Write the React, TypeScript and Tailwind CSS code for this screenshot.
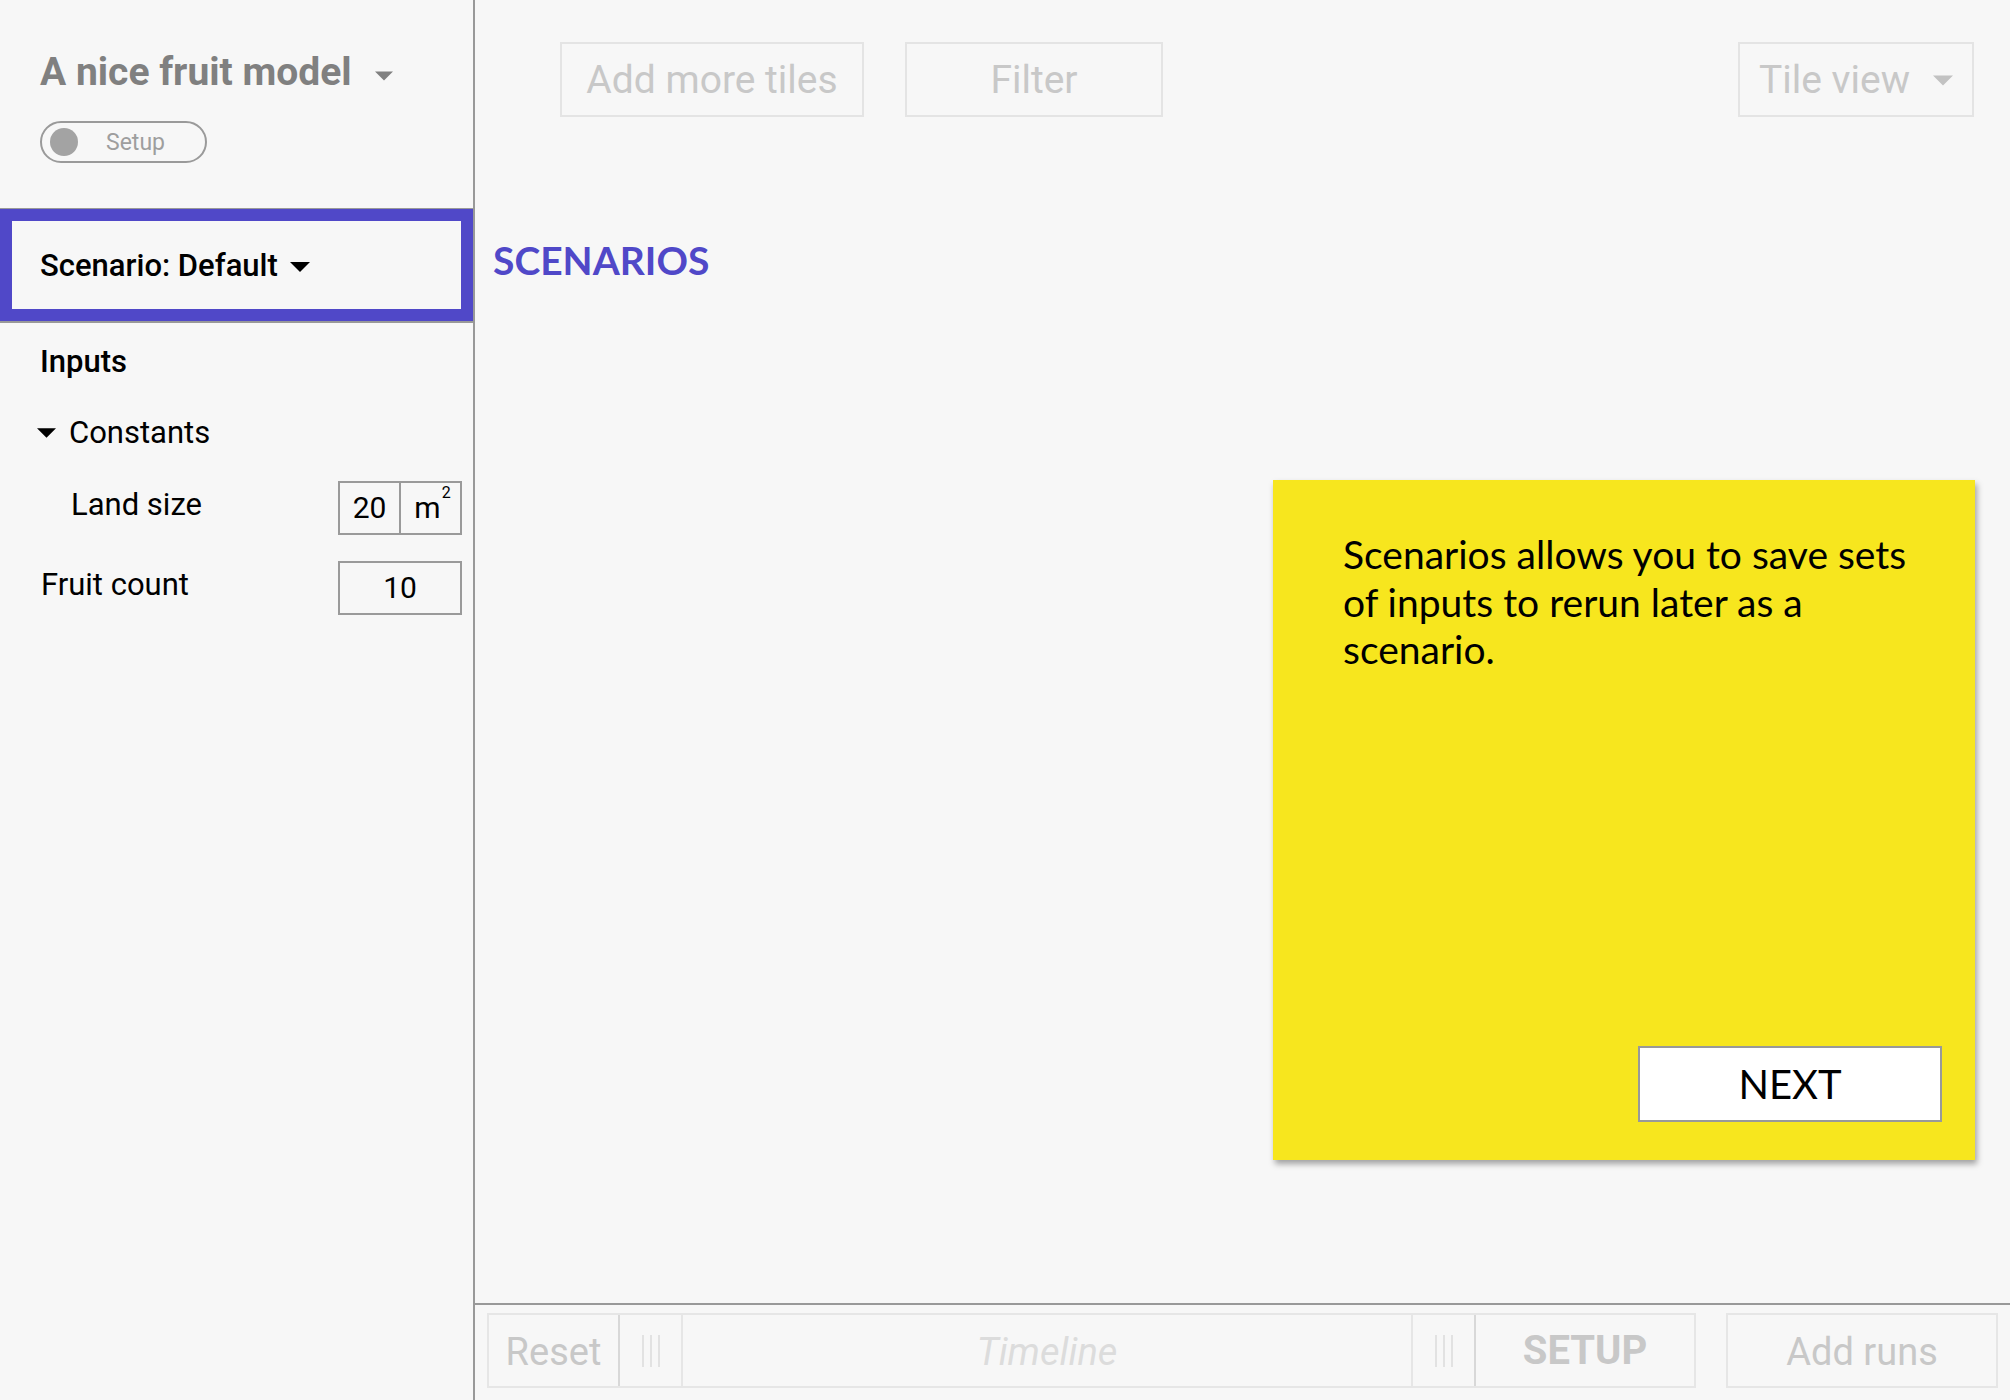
const roboto = { fontFamily: "Roboto, 'Liberation Sans', sans-serif" };
const lato = { fontFamily: "Lato, 'Open Sans', sans-serif" };

const Caret = ({ className }: { className: string }) => (
  <svg viewBox="0 0 20 10" className={className} fill="currentColor">
    <path d="M0 0 L20 0 L10 10 Z" />
  </svg>
);

const Grip = () => (
  <div className="flex gap-[6px] h-[32px]">
    <div className="w-[2px] h-full bg-[#e2e2e2]" />
    <div className="w-[2px] h-full bg-[#e2e2e2]" />
    <div className="w-[2px] h-full bg-[#e2e2e2]" />
  </div>
);

function Sidebar() {
  return (
    <aside className="w-[475px] shrink-0 border-r-2 border-[#999] flex flex-col text-black" style={roboto}>
      {/* Model title + setup toggle */}
      <div className="h-[209px] border-b border-[#999] pl-[40px] pt-[53px]">
        <div className="flex items-center">
          <h1 className="text-[39px] leading-none font-bold text-[#808080]">A nice fruit model</h1>
          <Caret className="w-[18px] h-[10px] ml-[23px] mt-[7px] text-[#808080]" />
        </div>
        <div className="mt-[29px] w-[167px] h-[42px] rounded-full border-2 border-[#9a9a9a] flex items-center pl-[8px]">
          <div className="w-[28px] h-[28px] rounded-full bg-[#a3a3a3]" />
          <span className="ml-[28px] text-[23px] leading-none text-[#9e9e9e]">Setup</span>
        </div>
      </div>

      {/* Scenario selector, highlighted */}
      <div className="border-b-2 border-[#999]">
        <div className="h-[112px] border-[12px] border-[#5048c8] flex items-center pl-[28px]">
          <span className="text-[31px] leading-none font-medium">Scenario: Default</span>
          <Caret className="w-[20px] h-[10px] ml-[12px] mt-[3px]" />
        </div>
      </div>

      {/* Inputs */}
      <div className="flex flex-col pr-[11px] text-[31px]">
        <div className="h-[76px] flex items-center pl-[40px]">
          <span className="leading-none font-medium">Inputs</span>
        </div>
        <div className="h-[67px] flex items-center pl-[37px]">
          <Caret className="w-[19px] h-[10px]" />
          <span className="ml-[13px] leading-none">Constants</span>
        </div>
        <div className="h-[84px] flex items-center justify-between pl-[71px]">
          <span className="leading-none mb-[7px]">Land size</span>
          <div className="w-[124px] h-[54px] border-2 border-[#9a9a9a] flex text-[30px] leading-none">
            <div className="w-[61px] border-r-2 border-[#9a9a9a] flex items-center justify-center">20</div>
            <div className="flex-1 flex items-center justify-center pl-[4px]">
              m<span className="relative -top-[15px] text-[16px] ml-[1px]">2</span>
            </div>
          </div>
        </div>
        <div className="h-[76px] flex items-center justify-between pl-[41px]">
          <span className="leading-none mb-[7px]">Fruit count</span>
          <div className="w-[124px] h-[54px] border-2 border-[#9a9a9a] flex items-center justify-center text-[30px] leading-none">
            10
          </div>
        </div>
      </div>
    </aside>
  );
}

function Toolbar() {
  return (
    <div className="flex pt-[42px] pr-[36px] text-[39px] leading-none text-[#c8c8c8]" style={roboto}>
      <button className="ml-[85px] w-[304px] h-[75px] border-2 border-[#e4e4e4] flex items-center justify-center pt-[2px]">
        Add more tiles
      </button>
      <button className="ml-[41px] w-[258px] h-[75px] border-2 border-[#e4e4e4] flex items-center justify-center pt-[2px]">
        Filter
      </button>
      <button className="ml-auto w-[236px] h-[75px] border-2 border-[#e4e4e4] flex items-center pl-[19px] pt-[2px]">
        Tile view
        <Caret className="w-[20px] h-[11px] ml-[23px] text-[#c2c2c2]" />
      </button>
    </div>
  );
}

function TutorialCard() {
  return (
    <div className="ml-auto mr-[35px] mt-[200px] w-[702px] h-[680px] bg-[#f7e61e] shadow-[2px_4px_6px_rgba(0,0,0,0.35)] flex flex-col" style={lato}>
      <p className="pt-[51px] pl-[70px] pr-[50px] text-[39px] leading-[47.5px] text-black">
        Scenarios allows you to save sets of inputs to rerun later as a scenario.
      </p>
      <button className="mt-auto self-end mr-[33px] mb-[38px] w-[304px] h-[76px] bg-white border-2 border-[#999] text-[40px] leading-none text-black flex items-center justify-center">
        NEXT
      </button>
    </div>
  );
}

function BottomBar() {
  return (
    <div className="h-[97px] border-t-2 border-[#999] pt-[8px] px-[12px] flex text-[38px] leading-none text-[#c8c8c8]" style={roboto}>
      <div className="flex-1 flex h-[75px] border-2 border-[#e6e6e6]">
        <div className="w-[131px] flex items-center justify-center border-r-2 border-[#d8d8d8] pt-[2px]">Reset</div>
        <div className="w-[63px] flex items-center justify-center border-r-2 border-[#e6e6e6]">
          <Grip />
        </div>
        <div className="flex-1 flex items-center justify-center italic text-[#dcdcdc] pt-[2px]">Timeline</div>
        <div className="w-[63px] flex items-center justify-center border-l-2 border-[#e6e6e6]">
          <Grip />
        </div>
        <div className="w-[220px] flex items-center justify-center border-l-2 border-[#d8d8d8] text-[40px] font-bold">
          SETUP
        </div>
      </div>
      <div className="ml-[30px] w-[272px] h-[75px] border-2 border-[#e6e6e6] flex items-center justify-center pt-[2px]">
        Add runs
      </div>
    </div>
  );
}

export default function App() {
  return (
    <div className="flex w-[2010px] h-[1400px] bg-[#f7f7f7] overflow-hidden">
      <Sidebar />
      <main className="flex-1 flex flex-col">
        <div className="flex-1 flex flex-col">
          <Toolbar />
          <h2 className="mt-[124px] pl-[18px] text-[39px] leading-none font-bold text-[#5048c8]" style={lato}>
            SCENARIOS
          </h2>
          <TutorialCard />
        </div>
        <BottomBar />
      </main>
    </div>
  );
}
